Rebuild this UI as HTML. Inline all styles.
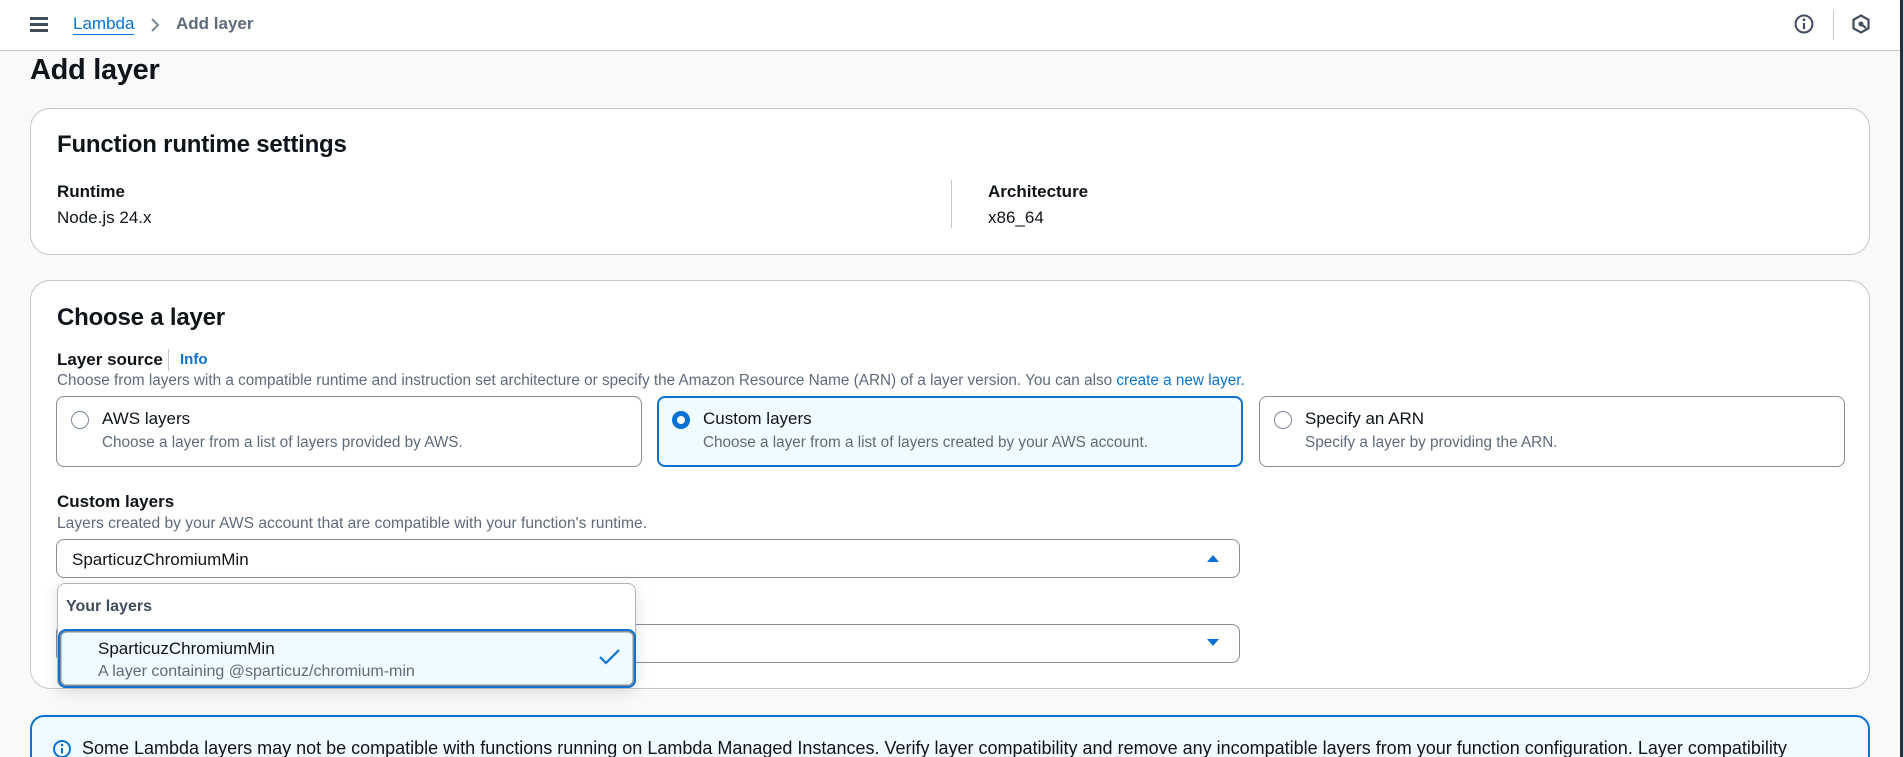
<!DOCTYPE html>
<html><head><meta charset="utf-8"><style>
*{box-sizing:border-box;margin:0;padding:0}
html,body{width:1903px;height:757px;overflow:hidden}
body{background:#f9f9f9;font-family:"Liberation Sans",sans-serif;color:#0f141a}
#w{position:relative;width:1903px;height:757px;overflow:hidden}
.abs{position:absolute}
.hdr{left:0;top:0;width:1903px;height:51px;background:#fff;border-bottom:1px solid #c6c6cd}
.card{background:#fff;border:1px solid #c6c6cd;border-radius:20px}
.h2{font-size:24px;font-weight:bold;letter-spacing:-0.2px}
.lbl{font-size:17px;font-weight:bold}
.val{font-size:17px}
.desc{font-size:15.3px;color:#5f6b7a;white-space:nowrap}
.tile{border:1px solid #8c8c94;border-radius:8px;background:#fff;height:71px}
.tile .r{position:absolute;left:14px;top:14px;width:18px;height:18px;border:1.5px solid #7d8998;border-radius:50%;background:#fff}
.tile .t{position:absolute;left:45px;top:12px;font-size:17px}
.tile .d{position:absolute;left:45px;top:37px;font-size:15.3px;color:#5f6b7a;white-space:nowrap}
.sel{border:1px solid #8c8c94;border-radius:8px;background:#fff}
</style></head><body><div id="w">
<div class="abs hdr"></div>
<div class="abs" style="left:30px;top:17px;width:18px;height:14px">
 <div style="height:2.5px;background:#414d5c;margin-bottom:3.5px"></div><div style="height:2.5px;background:#414d5c;margin-bottom:3.5px"></div><div style="height:2.5px;background:#414d5c"></div></div>
<div class="abs" style="left:73px;top:14px;font-size:17px;color:#0972d3;border-bottom:1.5px solid #0972d3;line-height:20px">Lambda</div>
<svg class="abs" style="left:149px;top:17px" width="12" height="16"><path d="M3 2l6 6-6 6" fill="none" stroke="#7d8998" stroke-width="2"/></svg>
<div class="abs" style="left:176px;top:14px;font-size:17px;font-weight:bold;color:#5f6b7a;line-height:20px">Add layer</div>
<svg class="abs" style="left:1793px;top:13px" width="22" height="22"><circle cx="11" cy="11" r="8.5" fill="none" stroke="#414d5c" stroke-width="2"/><path d="M11 10v6" stroke="#414d5c" stroke-width="2.2"/><circle cx="11" cy="6.8" r="1.4" fill="#414d5c"/></svg>
<div class="abs" style="left:1833px;top:10px;width:1px;height:30px;background:#c6c6cd"></div>
<svg class="abs" style="left:1850px;top:13px" width="22" height="22"><path d="M11 2.5l7.5 4.3v8.5L11 19.5l-7.5-4.2V6.8z" fill="none" stroke="#414d5c" stroke-width="2.2"/><circle cx="11" cy="11" r="2.5" fill="#414d5c"/><path d="M12 12l4 3" stroke="#414d5c" stroke-width="2.2"/></svg>

<div class="abs" style="left:30px;top:54px;font-size:29px;font-weight:bold;letter-spacing:-0.3px">Add layer</div>

<div class="abs card" style="left:30px;top:108px;width:1840px;height:147px"></div>
<div class="abs h2" style="left:57px;top:131px">Function runtime settings</div>
<div class="abs lbl" style="left:57px;top:182px">Runtime</div>
<div class="abs val" style="left:57px;top:208px">Node.js 24.x</div>
<div class="abs" style="left:951px;top:180px;width:1px;height:48px;background:#c6c6cd"></div>
<div class="abs lbl" style="left:988px;top:182px">Architecture</div>
<div class="abs val" style="left:988px;top:208px">x86_64</div>

<div class="abs card" style="left:30px;top:280px;width:1840px;height:409px"></div>
<div class="abs h2" style="left:57px;top:304px">Choose a layer</div>
<div class="abs lbl" style="left:57px;top:350px">Layer source</div>
<div class="abs" style="left:168px;top:349px;width:1px;height:22px;background:#c6c6cd"></div>
<div class="abs" style="left:180px;top:351px;font-size:15px;font-weight:bold;color:#0972d3">Info</div>
<div class="abs desc" style="left:57px;top:372px">Choose from layers with a compatible runtime and instruction set architecture or specify the Amazon Resource Name (ARN) of a layer version. You can also <span style="color:#0972d3">create a new layer.</span></div>

<div class="abs tile" style="left:56px;top:396px;width:586px"><div class="r"></div><div class="t">AWS layers</div><div class="d">Choose a layer from a list of layers provided by AWS.</div></div>
<div class="abs tile" style="left:657px;top:396px;width:586px;border:2px solid #0972d3;background:#f0fbff"><div class="r" style="border:5px solid #0972d3;left:13px;top:13px"></div><div class="t" style="left:44px;top:11px">Custom layers</div><div class="d" style="left:44px;top:36px">Choose a layer from a list of layers created by your AWS account.</div></div>
<div class="abs tile" style="left:1259px;top:396px;width:586px"><div class="r"></div><div class="t">Specify an ARN</div><div class="d">Specify a layer by providing the ARN.</div></div>

<div class="abs lbl" style="left:57px;top:492px">Custom layers</div>
<div class="abs desc" style="left:57px;top:515px;font-size:15.6px">Layers created by your AWS account that are compatible with your function's runtime.</div>
<div class="abs sel" style="left:56px;top:539px;width:1184px;height:39px"></div>
<div class="abs val" style="left:72px;top:550px">SparticuzChromiumMin</div>
<svg class="abs" style="left:1206px;top:552px" width="14" height="12"><path d="M1 10L7 3l6 7z" fill="#0972d3"/></svg>
<div class="abs sel" style="left:56px;top:624px;width:1184px;height:39px"></div>
<svg class="abs" style="left:1206px;top:637px" width="14" height="12"><path d="M1 2l6 7 6-7z" fill="#0972d3"/></svg>

<div class="abs" style="left:57px;top:583px;width:579px;height:105px;background:#fff;border:1px solid #b4b4bb;border-radius:8px;box-shadow:0 4px 16px rgba(0,7,22,0.12)"></div>
<div class="abs" style="left:66px;top:598px;font-size:16px;font-weight:bold;color:#414d5c">Your layers</div>
<div class="abs" style="left:58px;top:629px;width:578px;height:59px;border:2px solid #0972d3;border-radius:8px;background:#f0fbff;box-shadow:inset 0 0 0 1.5px #8c8c94"></div>
<div class="abs val" style="left:98px;top:639px">SparticuzChromiumMin</div>
<div class="abs desc" style="left:98px;top:663px;font-size:16px">A layer containing @sparticuz/chromium-min</div>
<svg class="abs" style="left:598px;top:647px" width="24" height="20"><path d="M2 10l6 6L21 3" fill="none" stroke="#0972d3" stroke-width="2.2"/></svg>

<div class="abs" style="left:30px;top:715px;width:1840px;height:80px;background:#f0fbff;border:2px solid #0972d3;border-radius:14px"></div>
<svg class="abs" style="left:52px;top:739px" width="20" height="20"><circle cx="10" cy="10" r="8" fill="none" stroke="#0972d3" stroke-width="2"/><path d="M10 9v5.5" stroke="#0972d3" stroke-width="2"/><circle cx="10" cy="6" r="1.3" fill="#0972d3"/></svg>
<div class="abs val" style="left:82px;top:738px;white-space:nowrap;font-size:18px">Some Lambda layers may not be compatible with functions running on Lambda Managed Instances. Verify layer compatibility and remove any incompatible layers from your function configuration. Layer compatibility</div>
<div class="abs" style="left:1900px;top:0;width:3px;height:757px;background:#232f3e"></div>
</div></body></html>
